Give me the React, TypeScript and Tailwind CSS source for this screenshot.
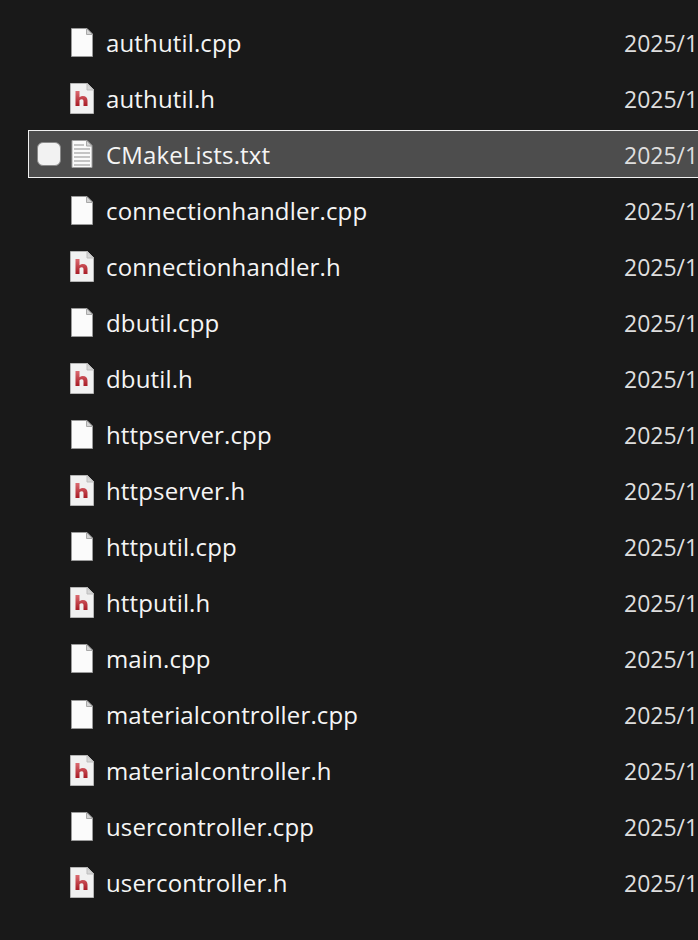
const files = [
  "authutil.cpp",
  "authutil.h",
  "CMakeLists.txt",
  "connectionhandler.cpp",
  "connectionhandler.h",
  "dbutil.cpp",
  "dbutil.h",
  "httpserver.cpp",
  "httpserver.h",
  "httputil.cpp",
  "httputil.h",
  "main.cpp",
  "materialcontroller.cpp",
  "materialcontroller.h",
  "usercontroller.cpp",
  "usercontroller.h",
];

const CppIcon = () => (
  <svg width="24" height="31" viewBox="0 0 24 31" className="shrink-0">
    <path d="M1.5 1.5H17L22.5 7V29.5H1.5Z" fill="#fbfbfb" stroke="#9a9a9a" />
    <path d="M16.5 1.5V7.5H22.5Z" fill="#d4d4d4" stroke="#a8a8a8" />
  </svg>
);

const HeaderIcon = () => (
  <svg width="26" height="33" viewBox="0 0 26 33" className="shrink-0">
    <defs>
      <linearGradient id="hRed" x1="0" y1="0" x2="0" y2="1">
        <stop offset="0" stopColor="#dc6a70" />
        <stop offset="1" stopColor="#a81c26" />
      </linearGradient>
    </defs>
    <path d="M1.5 1.5H18.5L24.5 7.5V31.5H1.5Z" fill="#f1f1f1" stroke="#b4b4b4" />
    <path d="M18 1.5V8H24.5Z" fill="#d6d6d6" stroke="#bdbdbd" />
    <path
      d="M6.5 9H10.5V15.3C11.5 14.4 12.6 14 13.8 14C16.9 14 18.5 15.8 18.5 18.6V24H14.5V19.2C14.5 17.9 13.9 17.2 12.8 17.2C11.9 17.2 11.1 17.6 10.5 18.3V24H6.5Z"
      fill="url(#hRed)"
    />
  </svg>
);

const TextIcon = () => (
  <svg width="22" height="28" viewBox="0 0 22 28" className="shrink-0">
    <path d="M1 0.5H16L21 5.5V27.5H1Z" fill="#fafafa" stroke="#a0a0a0" />
    <path d="M15.5 0.5V6H21Z" fill="#d4d4d4" stroke="#a8a8a8" />
    <path
      d="M3 5H13M3 9H19M3 13H19M3 17H19M3 21H19M3 25H19"
      stroke="#8f8f8f"
      strokeWidth="1"
      fill="none"
    />
  </svg>
);

const FileIcon = ({ name }: { name: string }) => {
  if (name.endsWith(".txt")) return <TextIcon />;
  if (name.endsWith(".h")) return <HeaderIcon />;
  return <CppIcon />;
};

export default function App() {
  return (
    <div className="h-[940px] w-[698px] overflow-hidden bg-[#191919] pl-[28px] pt-[18px] font-['Open_Sans','Noto_Sans',sans-serif] text-[#f5f5f5]">
      <div className="flex w-[720px] flex-col gap-2">
        {files.map((name) => {
          const selected = name === "CMakeLists.txt";
          return (
            <div
              key={name}
              className={
                selected
                  ? "flex h-12 items-center border border-[#f0f0f0] bg-[#4d4d4d]"
                  : "flex h-12 items-center border border-transparent"
              }
            >
              <div className="flex w-[32px] justify-end">
                {selected && (
                  <span className="h-6 w-6 rounded-md border border-[#8a8a8a] bg-[#f2f2f2]" />
                )}
              </div>
              <div className="flex w-[42px] justify-center">
                <FileIcon name={name} />
              </div>
              <span className="ml-[3px] w-[518px] pt-[2px] text-[24px] tracking-[0.15px]">{name}</span>
              <span className="pt-[2px] text-[23px] text-[#dedede]">2025/1</span>
            </div>
          );
        })}
      </div>
    </div>
  );
}
